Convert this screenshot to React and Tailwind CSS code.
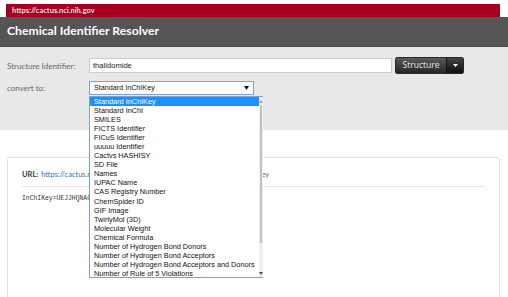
const options = [
  "Standard InChIKey",
  "Standard InChI",
  "SMILES",
  "FICTS Identifier",
  "FICuS Identifier",
  "uuuuu Identifier",
  "Cactvs HASHISY",
  "SD File",
  "Names",
  "IUPAC Name",
  "CAS Registry Number",
  "ChemSpider ID",
  "GIF Image",
  "TwirlyMol (3D)",
  "Molecular Weight",
  "Chemical Formula",
  "Number of Hydrogen Bond Donors",
  "Number of Hydrogen Bond Acceptors",
  "Number of Hydrogen Bond Acceptors and Donors",
  "Number of Rule of 5 Violations",
];

export default function App() {
  return (
    <div className="w-[508px] h-[297px] overflow-hidden bg-white relative font-['Lato',sans-serif]">
      {/* top url strip */}
      <div className="pt-[4px] px-[6px] pr-[8px]">
        <div className="h-[13px] bg-[#a50021] flex items-center px-[6px] text-[7.5px] font-bold text-[#f3dfe3]">
          https://cactus.nci.nih.gov
        </div>
      </div>

      {/* title bar */}
      <div className="h-[30px] bg-[#555555] flex items-center px-[7px] border-b border-[#4a4a4a]">
        <h1 className="text-[12.2px] font-bold text-white">
          Chemical Identifier Resolver
        </h1>
      </div>

      {/* form */}
      <div className="h-[83px] bg-[#e8e8e8] pt-[10px] px-[7px]">
        <div className="flex items-center h-[17px]">
          <span className="w-[82px] text-[8px] text-[#666]">Structure Identifier:</span>
          <div className="w-[303px] h-[15px] bg-white border border-[#ccc] flex items-center px-[3px] text-[7.6px] text-[#222] font-['Liberation_Sans',sans-serif]">
            thalidomide
          </div>
          <div className="ml-[3px] flex h-[17px] rounded-[2px] overflow-hidden border border-[#2a2a2a] bg-gradient-to-b from-[#5a5a5a] to-[#262626]">
            <span className="w-[50px] flex items-center justify-center text-[8.5px] text-[#e6e6e6] font-['Open_Sans',sans-serif]">
              Structure
            </span>
            <span className="w-[17px] flex items-center justify-center border-l border-[#111] bg-gradient-to-b from-[#444] to-[#111]">
              <svg width="5" height="3" viewBox="0 0 5 3">
                <path d="M0 0h5L2.5 3z" fill="#fff" />
              </svg>
            </span>
          </div>
        </div>
        <div className="flex items-center h-[14px] mt-[7px]">
          <span className="w-[82px] text-[8px] text-[#666]">convert to:</span>
          <div className="w-[165px] h-[14px] bg-white border border-[#7da2ce] flex items-center justify-between px-[4px] text-[7.2px] text-[#111] font-['Liberation_Sans',sans-serif]">
            <span>Standard InChIKey</span>
            <svg width="5" height="4" viewBox="0 0 5 4">
              <path d="M0 0h5L2.5 4z" fill="#111" />
            </svg>
          </div>
        </div>
      </div>

      {/* result card */}
      <div className="mx-[7px] mt-[27px] w-[493px] h-[200px] border border-[#e0e0e0] rounded-[3px] px-[14px]">
        <div className="h-[29px] border-b border-[#e6e6e6] flex items-end pb-[6px] text-[7.5px]">
          <span className="font-bold text-[#333] mr-[3px]">URL:</span>
          <span className="text-[#3a6fb7]">https://cactus.nci.nih.gov/chemical/structure/thalidomide/stdinchikey</span>
        </div>
        <div className="mt-[7px] text-[6.4px] text-[#333] font-['Liberation_Mono',monospace]">
          InChIKey=UEJJHQNACJXSKW-UHFFFAOYSA-N
        </div>
      </div>

      {/* open dropdown list */}
      <div className="absolute left-[89px] top-[96px] w-[174px] h-[182px] bg-white border border-[#7da2ce] flex font-['Liberation_Sans',sans-serif]">
        <ul className="flex-1">
          {options.map((o, i) => (
            <li
              key={o}
              className={
                i === 0
                  ? "h-[9.05px] leading-[9px] px-[4px] text-[7.3px] bg-[#1e90ff] text-white whitespace-nowrap"
                  : "h-[9.05px] leading-[9px] px-[4px] text-[7.3px] text-[#111] whitespace-nowrap"
              }
            >
              {o}
            </li>
          ))}
        </ul>
        <div className="w-[9px] bg-[#f0f0f0] flex flex-col">
          <div className="h-[8px] flex items-center justify-center">
            <svg width="4" height="3" viewBox="0 0 4 3">
              <path d="M0 3h4L2 0z" fill="#a3a3a3" />
            </svg>
          </div>
          <div className="h-[138px] mx-[1px] bg-[#c1c1c1]" />
          <div className="flex-1" />
          <div className="h-[8px] flex items-center justify-center">
            <svg width="4" height="3" viewBox="0 0 4 3">
              <path d="M0 0h4L2 3z" fill="#505050" />
            </svg>
          </div>
        </div>
      </div>
    </div>
  );
}
